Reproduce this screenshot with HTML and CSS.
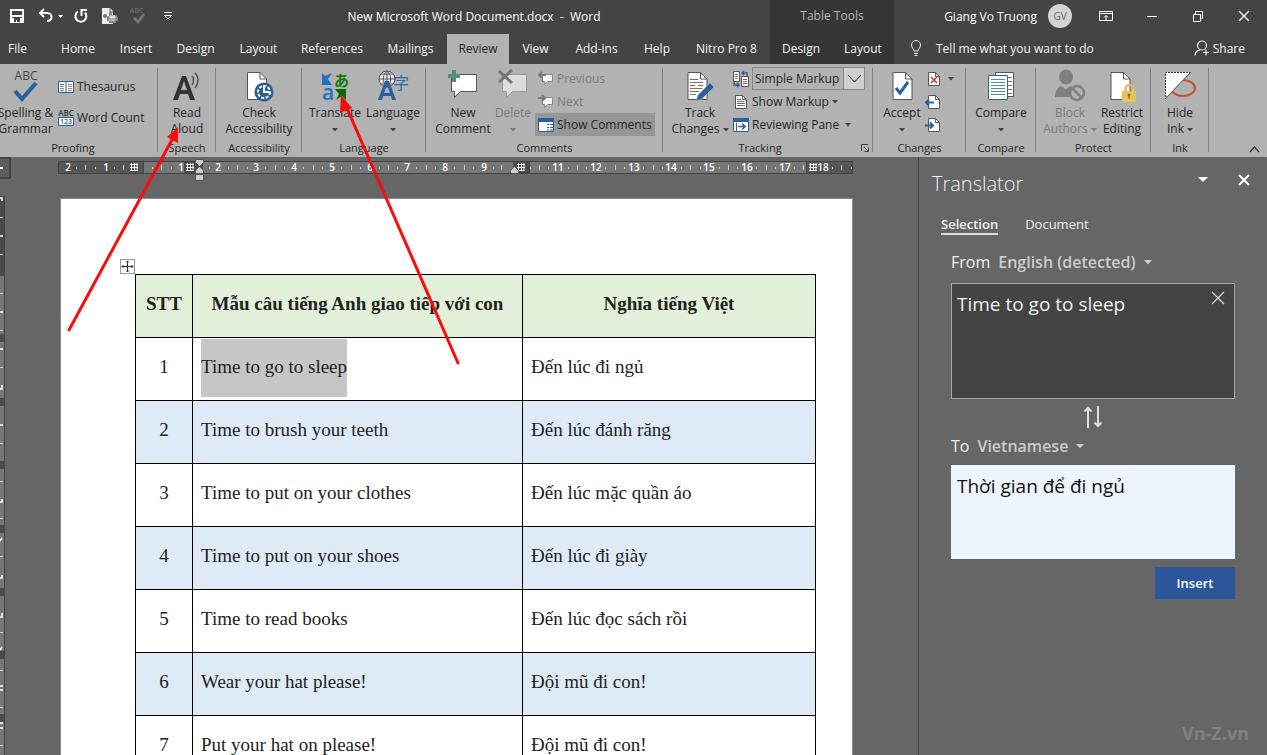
FILE: index.html
```html
<!DOCTYPE html>
<html lang="en">
<head>
<meta charset="utf-8">
<title>New Microsoft Word Document.docx - Word</title>
<link rel="stylesheet" href="styles.css">
</head>
<body>
<svg class="defs" aria-hidden="true">
  <symbol id="caret" viewBox="0 0 6 4"><path d="M0 0h6L3 3.5z" fill="currentColor"/></symbol>
  <symbol id="bubble" viewBox="0 0 16 16"><path d="M4.500 3.500h10v7h-5l-3 3v-3h-2z" fill="#f4f4f4" stroke="#8a8a8a"/></symbol>
  <symbol id="page" viewBox="0 0 20 28"><path d="M.5.5H13l6.500 6.500v20.500H.5z" fill="#fff" stroke="#555"/><path d="M13 .5V7h6.500" fill="none" stroke="#555"/></symbol>
  <symbol id="smallpage" viewBox="0 0 12 14"><path d="M.5.5h7l4 4v9H.5z" fill="#fff" stroke="#555"/><path d="M7.500.5v4h4" fill="none" stroke="#555"/></symbol>
  <symbol id="grid" viewBox="0 0 8 8"><path d="M0 1.500h8M0 4.500h8M0 7.500h8M1.500 0v8M4.500 0v8M7 0v8" stroke="#eee" fill="none"/></symbol>
</svg>

<header class="titlebar">
  <div class="quick">
    <button aria-label="Save"><svg width="16" height="16"><path d="M1 1h14v14H1z" fill="#fff"/><path d="M3 3h10v4H3zM5 10h6v4H8v-2H7v2H5zM3 9h10v1H3z" fill="#444"/></svg></button>
    <button aria-label="Undo"><svg width="26" height="16" fill="none" stroke="#fff"><path d="M2 5h7c6 0 6 8 0 8" stroke-width="2"/><path d="M6 1L2 5l4 4" stroke-width="2"/><path d="M20 7h5l-2.500 3z" fill="#fff" stroke="none"/></svg></button>
    <button aria-label="Redo"><svg width="16" height="16" fill="none" stroke="#fff" stroke-width="2"><path d="M5 3.500A5.500 5.500 0 1 0 12 4.500"/><path d="M8.500 8V2H14"/></svg></button>
    <button aria-label="Print preview"><svg width="18" height="18"><path d="M1 1h8l3 3v13H1z" fill="#eee"/><path d="M9 1v4h3" fill="none" stroke="#666"/><circle cx="4" cy="9" r="2" fill="#777"/><path d="M8 5h3v3h5v2h1v4h-2v2H8v-2H6v-5h2z" fill="#888"/><path d="M9 9h5v2H9zM8 13h6" fill="#ddd" stroke="#ddd"/></svg></button>
    <button aria-label="Spelling" disabled><svg width="18" height="18"><text x="0" y="6" font-size="7" fill="#777">ABC</text><path d="M4 11l4 4 6-8" fill="none" stroke="#777" stroke-width="2.500"/></svg></button>
    <button aria-label="Customize quick access"><svg width="10" height="8" fill="none" stroke="#eee"><path d="M1 .5h8M1.500 3.500h7L5 7z"/></svg></button>
  </div>
  <h1 class="doc-name">New Microsoft Word Document.docx&nbsp; -&nbsp; Word</h1>
  <div class="context-title">Table Tools</div>
  <div class="account">
    <span>Giang Vo Truong</span>
    <span class="avatar">GV</span>
    <div class="window-buttons">
      <button aria-label="Ribbon display options"><svg width="14" height="12" fill="none" stroke="#fff"><path d="M.5 1.500h13v9H.5zM.5 3.500h13M7 10V5.500M5 7.500l2-2 2 2"/></svg></button>
      <button aria-label="Minimize"><svg width="12" height="12" stroke="#fff"><path d="M1 6.500h10"/></svg></button>
      <button aria-label="Restore"><svg width="12" height="12" fill="none" stroke="#fff"><path d="M1.500 4.500h7v7h-7zM3.500 4V1.500h7v7H9"/></svg></button>
      <button aria-label="Close"><svg width="12" height="12" stroke="#fff" stroke-width="1.300"><path d="M1 1l10 10M11 1L1 11"/></svg></button>
    </div>
  </div>
</header>

<nav class="tabs">
  <button class="file">File</button><button>Home</button><button>Insert</button><button>Design</button><button>Layout</button><button>References</button><button>Mailings</button><button class="active">Review</button><button>View</button><button>Add-ins</button><button>Help</button><button>Nitro Pro 8</button><button class="context">Design</button><button class="context">Layout</button>
  <div class="tab-tools">
    <button class="tell"><svg width="12" height="16" fill="none" stroke="#eee"><path d="M4 11c0-2-2.500-3-2.500-6a4.500 4.500 0 0 1 9 0c0 3-2.500 4-2.500 6zM4 13.500h4M4.500 15.500h3"/></svg>Tell me what you want to do</button>
    <button class="share"><svg width="16" height="16" fill="none" stroke="#eee" stroke-width="1.200"><circle cx="8" cy="5.500" r="4.500"/><path d="M1 15.500c0-3 2-5 5-5.700M9 12.500h6M12 9.500v6"/></svg>Share</button>
  </div>
</nav>

<section class="ribbon" aria-label="Review">
  <div class="group proofing">
    <div class="body">
      <button class="big"><svg width="30" height="34"><text x="15" y="11" font-size="12" text-anchor="middle" fill="#444">ABC</text><path d="M4 22l7 8L25 14" fill="none" stroke="#2b5f9e" stroke-width="4"/></svg>Spelling &amp;<br>Grammar</button>
      <div class="stack">
        <button><svg width="16" height="14"><path d="M.5 1.500h15v11H.5z" fill="#fff" stroke="#2b5f8e"/><path d="M8 1v12" stroke="#2b5f8e"/><path d="M2 4.500h4M2 6.500h4M2 8.500h4M2 10.500h4M10 4.500h4M10 6.500h4M10 8.500h4M10 10.500h4" stroke="#888"/><path d="M2 4.500h4" stroke="#b43"/></svg>Thesaurus</button>
        <button><svg width="16" height="17"><text x="8" y="7" font-size="8" font-weight="600" text-anchor="middle" fill="#333">ABC</text><path d="M.5 8.500h15v8H.5z" fill="#fff" stroke="#2b5f9e"/><text x="8" y="15" font-size="7" font-weight="600" text-anchor="middle" fill="#2b5f9e">123</text></svg>Word Count</button>
      </div>
    </div>
    <div class="name">Proofing</div>
  </div>
  <div class="group">
    <div class="body"><button class="big"><svg width="30" height="34"><path fill-rule="evenodd" d="M1 31L10 7h4l9 24h-5l-2-6H8l-2 6zM9 21h6l-3-9z" fill="#333"/><path d="M20 7c2 2 2 6 0 9M23 4c4 4 4 10 0 15" fill="none" stroke="#555" stroke-width="1.500"/></svg>Read<br>Aloud</button></div>
    <div class="name">Speech</div>
  </div>
  <div class="group">
    <div class="body"><button class="big"><svg width="30" height="34"><use href="#page" x="3" y="3" width="20" height="28"/><circle cx="20" cy="23" r="9.500" fill="#2b5f8e"/><circle cx="20" cy="23" r="6" fill="none" stroke="#fff" stroke-width="2" stroke-dasharray="3 1.500"/><path d="M20 16v7h5" stroke="#fff" stroke-width="2" fill="none"/></svg>Check<br>Accessibility</button></div>
    <div class="name">Accessibility</div>
  </div>
  <div class="group language">
    <div class="body">
      <button class="big"><svg width="30" height="34"><text x="2" y="31" font-size="21" font-weight="600" fill="#1f74c4">a</text><text x="14" y="17" font-size="15" fill="#107c10" font-weight="700" class="cjk">あ</text><path d="M2 4l3 3 7-3-4 6 4 6H2z" fill="#1f74c4"/><path d="M15 20h11v11l-4-4-6 4 3-6z" fill="#0b6a0b"/></svg>Translate<br><svg class="caret"><use href="#caret"/></svg></button>
      <button class="big"><svg width="34" height="34"><circle cx="11" cy="10" r="8" fill="#eee" stroke="#555"/><path d="M3 10h16M11 2v16M5 5h12M5 15h12M11 2c-5 4-5 12 0 16M11 2c5 4 5 12 0 16" fill="none" stroke="#555"/><text x="17" y="20" font-size="16" fill="#2b6aa8" class="cjk">字</text><path fill-rule="evenodd" d="M2 31l7-19h4l7 19h-4l-1-4H7l-1 4zM8 24h6l-3-8z" fill="#2b5f9e"/></svg>Language<br><svg class="caret"><use href="#caret"/></svg></button>
    </div>
    <div class="name">Language</div>
  </div>
  <div class="group comments">
    <div class="body">
      <button class="big new"><svg width="32" height="34"><path d="M4.500 5.500h25v17h-16l-6 6v-6h-3z" fill="#fff" stroke="#555"/><path d="M7 1v12M1 7h12" stroke="#4f8f78" stroke-width="4"/></svg>New<br>Comment</button>
      <button class="big" disabled><svg width="32" height="34"><path d="M5.500 5.500h24v17h-14l-6 6v-6h-4z" fill="#ddd" stroke="#999"/><path d="M2 2l13 12M15 1L2 13" stroke="#777" stroke-width="3"/></svg>Delete<br><svg class="caret"><use href="#caret"/></svg></button>
      <div class="stack">
        <button disabled><svg width="16" height="16"><use href="#bubble"/><path d="M1 4h7M4 1L1 4l3 3" fill="none" stroke="#777" stroke-width="2"/></svg>Previous</button>
        <button disabled><svg width="16" height="16"><use href="#bubble"/><path d="M0 4h7M4 1l3 3-3 3" fill="none" stroke="#777" stroke-width="2"/></svg>Next</button>
        <button class="pressed" aria-pressed="true"><svg width="16" height="14"><path d="M.5.5h15v13H.5z" fill="#fff" stroke="#2b5f9e"/><path d="M0 0h16v4H0z" fill="#2b5f9e"/><path d="M9 6.500h2M12 6.500h3M9 9.500h2M12 9.500h3M9 12h2M12 12h3" stroke="#2b5f9e"/></svg>Show Comments</button>
      </div>
    </div>
    <div class="name">Comments</div>
  </div>
  <div class="group tracking">
    <div class="body">
      <button class="big"><svg width="32" height="34"><use href="#page" x="3" y="3" width="21" height="28"/><path d="M6 10.500h8M6 16.500h5M14 16.500h5M6 22.500h9" stroke="#b5573f"/><path d="M6 13.500h13M6 19.500h12M6 25.500h6" stroke="#777"/><path d="M12 32l2-6 12-12 4 4-12 12z" fill="#2b5f9e" stroke="#b2b2b2" stroke-width=".6"/></svg>Track<br>Changes <svg class="caret"><use href="#caret"/></svg></button>
      <div class="stack">
        <div class="row">
          <svg width="16" height="18"><path d="M.5 1.500h6v10h-6zM8.500 6.500h7v10h-7z" fill="#fff" stroke="#555"/><path d="M2 4.500h3M2 6.500h3M2 8.500h3M10 11.500h4" stroke="#777"/><path d="M10 9.500h4M10 13.500h4" stroke="#b43"/><path d="M9 3h5v3M11 1L9 3l2 2M1 12v3h5M4 13l2 2-2 2" fill="none" stroke="#2b5f9e" stroke-width="1.500"/></svg>
          <label class="markup"><select aria-label="Display for review"><option>Simple Markup</option></select><span class="drop"><svg width="15" height="9" fill="none" stroke="#333"><path d="M1 1l6.500 7L14 1"/></svg></span></label>
        </div>
        <button><svg width="16" height="14"><use href="#smallpage" x="2" y="0" width="12" height="14"/><path d="M4 4.500h4M4 8.500h8" stroke="#b43"/><path d="M4 6.500h7M4 10.500h8" stroke="#777"/></svg>Show Markup<svg class="caret"><use href="#caret"/></svg></button>
        <button><svg width="16" height="14"><path d="M.5.5h15v13H.5z" fill="#fff" stroke="#2b5f9e"/><path d="M0 0h16v4H0z" fill="#2b5f9e"/><path d="M3.500 5v8" stroke="#555"/><path d="M5 8.500h8M9 5.500l3 3-3 3" fill="none" stroke="#2b5f9e" stroke-width="1.500"/></svg>Reviewing Pane<svg class="caret far"><use href="#caret"/></svg></button>
      </div>
    </div>
    <div class="name">Tracking<button class="launcher" aria-label="Tracking options"><svg width="8" height="8" fill="none" stroke="#444"><path d="M.5 7V.5H7M3 3l4 4M7.500 3.500v4h-4"/></svg></button></div>
  </div>
  <div class="group changes">
    <div class="body">
      <button class="big"><svg width="24" height="34"><use href="#page" x="2" y="3" width="21" height="28"/><path d="M6 19l4 5 8-11" fill="none" stroke="#2b5f9e" stroke-width="3"/></svg>Accept<br><svg class="caret"><use href="#caret"/></svg></button>
      <div class="stack">
        <button aria-label="Reject"><svg width="16" height="16"><use href="#smallpage" x="3" y="1" width="12" height="14"/><path d="M6 6l6 6M12 6l-6 6" stroke="#c0392b" stroke-width="1.500"/></svg><svg class="caret"><use href="#caret"/></svg></button>
        <button aria-label="Previous change"><svg width="16" height="16"><use href="#smallpage" x="3" y="1" width="12" height="14"/><path d="M1 8.500h8M4 5.500l-3 3 3 3" fill="none" stroke="#2b5f9e" stroke-width="2"/></svg></button>
        <button aria-label="Next change"><svg width="16" height="16"><use href="#smallpage" x="3" y="1" width="12" height="14"/><path d="M0 8.500h8M5 5.500l3 3-3 3" fill="none" stroke="#2b5f9e" stroke-width="2"/></svg></button>
      </div>
    </div>
    <div class="name">Changes</div>
  </div>
  <div class="group">
    <div class="body"><button class="big"><svg width="28" height="34"><path d="M8.500 3.500h18v24h-18z" fill="#fff" stroke="#555"/><path d="M21 8.500h4M21 12.500h4M21 16.500h4M21 20.500h4M21 24.500h4" stroke="#777"/><path d="M1.500 6.500h19v24h-19z" fill="#fff" stroke="#2b6a8e"/><path d="M4 10.500h14M4 13.500h14M4 16.500h14M4 19.500h14M4 22.500h14M4 25.500h14" stroke="#5c86a8"/></svg>Compare<br><svg class="caret"><use href="#caret"/></svg></button></div>
    <div class="name">Compare</div>
  </div>
  <div class="group protect">
    <div class="body">
      <button class="big" disabled><svg width="32" height="34" fill="#808080"><ellipse cx="12" cy="8" rx="7" ry="7.500"/><path d="M1 28c0-7 3-9 6-11l5 3 5-3c3 1 4 3 5 5v6z"/><circle cx="23" cy="24" r="7" fill="#b2b2b2" stroke="#808080" stroke-width="2.500"/><path d="M18 19l10 10" stroke="#808080" stroke-width="2.500"/></svg>Block<br>Authors <svg class="caret"><use href="#caret"/></svg></button>
      <button class="big"><svg width="30" height="34"><use href="#page" x="3" y="3" width="21" height="28"/><path d="M18.500 23v-3a4 4 0 0 1 8 0v3" fill="none" stroke="#e3bb58" stroke-width="2.500"/><path d="M15 22h14v11H15z" fill="#e8c15e"/><circle cx="22" cy="26" r="1.500" fill="#8a6d24"/><path d="M22 26v4" stroke="#8a6d24"/></svg>Restrict<br>Editing</button>
    </div>
    <div class="name">Protect</div>
  </div>
  <div class="group">
    <div class="body"><button class="big"><svg width="34" height="34"><ellipse cx="20" cy="19" rx="12" ry="8" fill="none" stroke="#c4512c" stroke-width="2"/><path d="M2 3h26L2 30z" fill="#fff"/><path d="M28 3.500H2.500V30" fill="none" stroke="#333" stroke-dasharray="2 1"/><path d="M28 3L2 30" stroke="#444"/></svg>Hide<br>Ink <svg class="caret"><use href="#caret"/></svg></button></div>
    <div class="name">Ink</div>
  </div>
  <div class="ribbon-end"><button aria-label="Collapse the ribbon"><svg width="11" height="7" fill="none" stroke="#333" stroke-width="1.200"><path d="M1 6l4.500-5L10 6"/></svg></button></div>
</section>

<main class="workspace">
  <div class="side-ruler">
    <div class="corner"><svg width="4" height="12"><path d="M0 9h3" stroke="#fff" stroke-width="2"/></svg></div>
    <svg width="5" height="559" viewBox="0 196 5 559">
      <path d="M0 196h5v559H0z" fill="#777"/>
      <path d="M0 196h5v80H0zM0 334h5v8H0zM0 398h5v8H0zM0 461h5v8H0zM0 525h5v8H0zM0 588h5v8H0zM0 651h5v8H0zM0 714h5v8H0z" fill="#4a4a4a"/>
      <path d="M0 217.500h3M0 254.500h3M0 293.500h3M0 330.500h3M0 367.500h3M0 443.500h3M0 481.500h3M0 518.500h3M0 556.500h3M0 632.500h3M0 670.500h3M0 707.500h3M0 745.500h3" stroke="#ccc"/>
      <path d="M0 198h2v3M0 236h3M0 312h3M0 349h3M2 385v4h-2M0 425h3M2 499v3H0M2 538l-2 3M2 575v3H0M2 613v4H0M2 647l-2 3M0 686h3M0 690h3M0 723h3M0 728h3" stroke="#fff" fill="none" stroke-width="1.500"/>
      <path d="M4.500 196v559" stroke="#444"/>
    </svg>
  </div>
  <div class="canvas">
    <svg class="ruler" width="795" height="24" viewBox="58 159 795 24">
      <path d="M58.500 161.500h794v12h-794z" fill="#777" stroke="#444"/>
      <path d="M59 162h84v11H59zM806 162h46v11h-46z" fill="#565656"/>
      <path d="M184 162h19v11h-19zM513 162h17v11h-17z" fill="#4a4a4a"/>
      <path d="M143.500 161v13M806.500 161v13" stroke="#444"/>
      <path d="M85.500 165v5M123.500 165v5M161.500 165v5M237.500 165v5M275.500 165v5M313.500 165v5M351.500 165v5M388.500 165v5M426.500 165v5M464.500 165v5M501.500 165v5M539.500 165v5M577.500 165v5M615.500 165v5M653.500 165v5M690.500 165v5M728.500 165v5M766.500 165v5M803.500 165v5M841.500 165v5" stroke="#ccc"/>
      <path d="M76.500 167v2M95.500 167v2M114.500 167v2M152.500 167v2M171.500 167v2M209.500 167v2M228.500 167v2M247.500 167v2M265.500 167v2M284.500 167v2M303.500 167v2M322.500 167v2M341.500 167v2M360.500 167v2M379.500 167v2M397.500 167v2M416.500 167v2M435.500 167v2M454.500 167v2M473.500 167v2M493.500 167v2M530.500 167v2M548.500 167v2M568.500 167v2M586.500 167v2M605.500 167v2M624.500 167v2M643.500 167v2M662.500 167v2M681.500 167v2M700.500 167v2M719.500 167v2M737.500 167v2M756.500 167v2M775.500 167v2M794.500 167v2M832.500 167v2M851.500 167v2" stroke="#ccc"/>
      <g class="numbers"><text x="68" y="171">2</text><text x="106" y="171">1</text><text x="181" y="171">1</text><text x="218" y="171">2</text><text x="256" y="171">3</text><text x="294" y="171">4</text><text x="332" y="171">5</text><text x="370" y="171">6</text><text x="407" y="171">7</text><text x="445" y="171">8</text><text x="484" y="171">9</text><text x="558" y="171">11</text><text x="596" y="171">12</text><text x="634" y="171">13</text><text x="671" y="171">14</text><text x="709" y="171">15</text><text x="747" y="171">16</text><text x="785" y="171">17</text><text x="823" y="171">18</text></g>
      <use href="#grid" x="130" y="163" width="8" height="8"/><use href="#grid" x="186" y="163" width="8" height="8"/><use href="#grid" x="517" y="163" width="8" height="8"/><use href="#grid" x="809" y="163" width="8" height="8"/>
      <path d="M195.500 159.500h8v3l-4 4-4-4zM195.500 173.500v-3l4-4 4 4v3zM195.500 174.500h8v6h-8zM510.500 173.500v-3l4-4 4 4v3z" fill="#ccc" stroke="#555"/>
    </svg>
    <article class="page">
      <div class="table-box">
        <button class="move" aria-label="Move table"><svg width="13" height="13" fill="none" stroke="#333"><path d="M1 6.500h11M6.500 1v11M5 2.500L6.500 1 8 2.500M5 10.500L6.500 12 8 10.500M2.500 5L1 6.500 2.500 8M10.500 5L12 6.500 10.500 8"/></svg></button>
        <table>
          <colgroup><col class="c-num"><col class="c-en"><col class="c-vi"></colgroup>
          <thead><tr><th>STT</th><th>Mẫu câu tiếng Anh giao tiếp với con</th><th>Nghĩa tiếng Việt</th></tr></thead>
          <tbody>
            <tr><td>1</td><td><span class="selected">Time to go to sleep</span></td><td>Đến lúc đi ngủ</td></tr>
            <tr><td>2</td><td>Time to brush your teeth</td><td>Đến lúc đánh răng</td></tr>
            <tr><td>3</td><td>Time to put on your clothes</td><td>Đến lúc mặc quần áo</td></tr>
            <tr><td>4</td><td>Time to put on your shoes</td><td>Đến lúc đi giày</td></tr>
            <tr><td>5</td><td>Time to read books</td><td>Đến lúc đọc sách rồi</td></tr>
            <tr><td>6</td><td>Wear your hat please!</td><td>Đội mũ đi con!</td></tr>
            <tr><td>7</td><td>Put your hat on please!</td><td>Đội mũ đi con!</td></tr>
          </tbody>
        </table>
      </div>
    </article>
  </div>
  <aside class="translator">
    <div class="pane-head">
      <h2>Translator</h2>
      <button aria-label="Pane options"><svg width="10" height="6"><path d="M0 0h10L5 5z" fill="#fff"/></svg></button>
      <button aria-label="Close pane"><svg width="12" height="12" stroke="#fff" stroke-width="2"><path d="M1 1l10 10M11 1L1 11"/></svg></button>
    </div>
    <div class="pane-tabs"><button class="current">Selection</button><button>Document</button></div>
    <div class="pane-body">
      <div class="lang from"><label for="from">From</label><select id="from"><option>English (detected)</option></select><svg class="arrow" width="8" height="5"><path d="M0 0h8L4 4.500z" fill="#ccc"/></svg></div>
      <div class="source">
        <textarea aria-label="Source text" spellcheck="false">Time to go to sleep</textarea>
        <button class="clear" aria-label="Clear"><svg width="14" height="14" stroke="#ddd" stroke-width="1.200"><path d="M1 1l12 12M13 1L1 13"/></svg></button>
      </div>
      <button class="swap" aria-label="Swap languages"><svg width="20" height="24" fill="none" stroke="#ddd" stroke-width="2"><path d="M5 23V3M1.500 6.500L5 3l3.500 3.500M15 1v20M11.500 17.500L15 21l3.500-3.500"/></svg></button>
      <div class="lang to"><label for="to">To</label><select id="to"><option>Vietnamese</option></select><svg class="arrow" width="8" height="5"><path d="M0 0h8L4 4.500z" fill="#ccc"/></svg></div>
      <textarea class="result" aria-label="Translation" spellcheck="false">Thời gian để đi ngủ</textarea>
      <button class="insert">Insert</button>
    </div>
    <div class="mark">Vn-Z.vn</div>
  </aside>
</main>

<svg class="arrows" width="480" height="380" aria-hidden="true">
  <path d="M69 330L174 136M458 363L346 106" stroke="#f80c0c" stroke-width="3" fill="none" stroke-linecap="round"/>
  <path d="M178 127L178 143 167 137zM341 95L352 108 340 113z" fill="#f80c0c"/>
</svg>
</body>
</html>
```
FILE: styles.css
```css
* { box-sizing: border-box; }
body { margin: 0; height: 100vh; overflow: hidden; display: flex; flex-direction: column; background: #666; color: #262626; font-family: "Open Sans", "Noto Sans", sans-serif; font-size: 12px; }
button { margin: 0; padding: 0; border: 0; background: none; color: inherit; font: inherit; }
h1, h2 { margin: 0; font-weight: 400; }
svg { display: block; flex: none; }
.defs { position: absolute; width: 0; height: 0; }
.cjk { font-family: "Noto Sans CJK JP", sans-serif; }

.titlebar { display: grid; grid-template-columns: 184px 586px 124px 1fr; height: 32px; flex: none; align-items: center; background: #444; color: #fff; }
.quick { display: grid; grid-template-columns: 34px 34px 26px 32px 26px 32px; justify-items: center; align-items: center; }
.quick button { display: flex; }
.doc-name { font-size: 12px; text-align: center; padding-right: 6px; }
.context-title { height: 32px; line-height: 32px; text-align: center; background: #363636; color: #b4b4b4; }
.account { display: flex; align-items: center; justify-content: flex-end; }
.avatar { width: 24px; height: 24px; margin: 0 11px; border-radius: 50%; background: #d4d4d4; color: #666; font-size: 10px; line-height: 24px; text-align: center; }
.window-buttons { display: flex; }
.window-buttons button { width: 46px; height: 32px; display: flex; align-items: center; justify-content: center; }

.tabs { display: grid; grid-template-columns: 48px 60px 56px 63px 63px 84px 73px 62px 53px 69px 52px 87px 62px 62px 1fr; height: 32px; flex: none; background: #444; color: #f4f4f4; }
.tabs button { white-space: nowrap; }
.tabs .file { text-align: left; padding-left: 8px; }
.tabs .active { margin-top: 2px; padding-bottom: 2px; background: #b2b2b2; color: #262626; }
.tabs .context { background: #363636; }
.tab-tools { display: flex; justify-content: space-between; padding: 0 22px 0 16px; }
.tab-tools button { display: flex; align-items: center; gap: 14px; }
.tab-tools .share { gap: 3px; }

.ribbon { display: grid; grid-template-columns: 158px 58px 86px 124px 237px 210px 93px 70px 115px 58px 1fr; height: 93px; flex: none; background: #b2b2b2; }
.group { position: relative; display: flex; flex-direction: column; min-width: 0; }
.group::after { content: ""; position: absolute; right: 0; top: 4px; bottom: 5px; width: 1px; background: #808080; }
.body { display: flex; justify-content: center; height: 75px; }
.name { height: 18px; line-height: 18px; font-size: 11px; text-align: center; }
.big { display: flow-root; padding-top: 5px; line-height: 16px; white-space: nowrap; text-align: center; align-self: flex-start; }
.big > svg:first-child { margin: 0 auto 2px; }
.caret { display: inline-block; width: 6px; height: 4px; vertical-align: middle; color: #444; }
button:disabled { color: #7c7c7c; }
button:disabled .caret { color: #7c7c7c; }
.stack { display: flex; flex-direction: column; padding-top: 3px; }
.stack button, .row { display: flex; align-items: center; gap: 3px; height: 23px; white-space: nowrap; }
.proofing .body, .language .body, .comments .body, .tracking .body, .changes .body, .protect .body { justify-content: flex-start; }
.proofing .name { padding-right: 12px; }
.proofing .big { width: 57px; margin-left: -3px; }
.proofing .stack { padding: 7px 0 0 4px; }
.proofing .stack button { height: 31px; }
.language .body { padding-left: 4px; }
.language .big { width: 58px; }
.comments .body { padding-left: 6px; }
.comments .new { width: 62px; }
.comments .big + .big { width: 38px; }
.comments .stack { padding-left: 3px; }
.comments .stack button { padding: 0 3px; }
.comments .pressed { background: #969696; }
.tracking .name { padding-right: 16px; }
.tracking .body { padding-left: 7px; }
.tracking .big { width: 60px; }
.tracking .stack { padding-left: 3px; }
.tracking .far { margin-left: 3px; }
.markup { display: flex; width: 113px; height: 23px; border: 1px solid #888; }
.markup select { flex: 1; min-width: 0; appearance: none; border: 0; padding: 0 2px; background: transparent; color: inherit; font: inherit; }
.drop { display: flex; align-items: center; justify-content: center; width: 21px; background: #d0d0d0; border-left: 1px solid #888; }
.launcher { position: absolute; right: 4px; bottom: 5px; }
.changes .body { padding-left: 8px; }
.changes .big { width: 42px; }
.changes .stack { padding-left: 2px; }
.changes .stack button { gap: 7px; }
.protect .body { padding-left: 6px; gap: 2px; }
.protect .big { width: 56px; }
.protect .big + .big { width: 44px; }
.ribbon-end { display: flex; align-items: flex-end; justify-content: flex-end; padding: 0 7px 4px 0; }

.workspace { flex: 1; min-height: 0; display: flex; }
.side-ruler { flex: none; width: 11px; }
.corner { height: 22px; margin-bottom: 17px; border: 2px solid #444; border-left: 0; background: #5c5c5c; }
.canvas { flex: 1; min-width: 0; overflow: hidden; padding-top: 2px; }
.ruler { margin-left: 47px; }
.numbers { font-size: 10px; font-weight: 600; fill: #fff; text-anchor: middle; }
.page { width: 793px; height: 100%; margin: 15px 0 0 49px; padding: 75px 36px 0 74px; border: 1px solid #8c8c8c; background: #fff; font-family: "Liberation Serif", serif; font-size: 19px; }
.table-box { position: relative; }
.move { position: absolute; left: -15px; top: -15px; border: 1px solid #999; background: #fff; }
table { width: 100%; border-collapse: collapse; table-layout: fixed; color: #222; }
.c-num { width: 57px; }
.c-en { width: 330px; }
th, td { height: 63px; border: 1px solid #000; padding: 0 8px 4px; text-align: left; line-height: 24px; }
th { background: #e2efd9; text-align: center; padding: 0 0 4px; }
td:first-child { text-align: center; }
tbody tr:nth-child(even) { background: #deeaf6; }
.selected { padding: 17px 0 20px; background: #c6c6c6; }

.translator { flex: none; width: 349px; display: flex; flex-direction: column; border-left: 1px solid #484848; color: #f0f0f0; }
.pane-head { display: flex; align-items: center; height: 54px; padding: 0 17px 2px 13px; gap: 30px; }
.pane-head h2 { flex: 1; font-size: 20px; font-weight: 300; }
.pane-head button { padding-bottom: 6px; }
.pane-tabs { display: flex; align-items: center; gap: 27px; height: 30px; padding: 0 0 2px 22px; font-size: 13px; }
.pane-tabs button { height: 20px; line-height: 18px; border-bottom: 2px solid transparent; }
.pane-tabs .current { font-weight: 600; border-color: #ddd; }
.pane-body { display: flex; flex-direction: column; padding: 0 32px; }
.lang { display: flex; align-items: center; gap: 8px; height: 42px; font-size: 16px; }
.to { height: 30px; padding-bottom: 8px; }
.lang select { appearance: none; border: 0; padding: 0; background: transparent; color: #ccc; font: inherit; font-weight: 600; }
.source { position: relative; height: 116px; }
textarea { display: block; width: 100%; height: 100%; margin: 0; padding: 6px 5px; resize: none; border: 1px solid #a6a6a6; background: #444; color: #f0f0f0; font: 19px/28px "Open Sans", "Noto Sans", sans-serif; }
.clear { position: absolute; right: 10px; top: 8px; }
.swap { align-self: center; height: 36px; }
.result { height: 94px; border-color: #eff5ff; background: #eff5ff; color: #111; }
.insert { align-self: flex-end; width: 80px; height: 32px; margin-top: 8px; background: #2b579a; color: #fff; font-size: 13px; font-weight: 600; }
.mark { margin: auto 18px 8px 0; text-align: right; font-size: 18px; line-height: 28px; font-weight: 700; color: #808086; }
.arrows { position: absolute; left: 0; top: 0; pointer-events: none; }
```
